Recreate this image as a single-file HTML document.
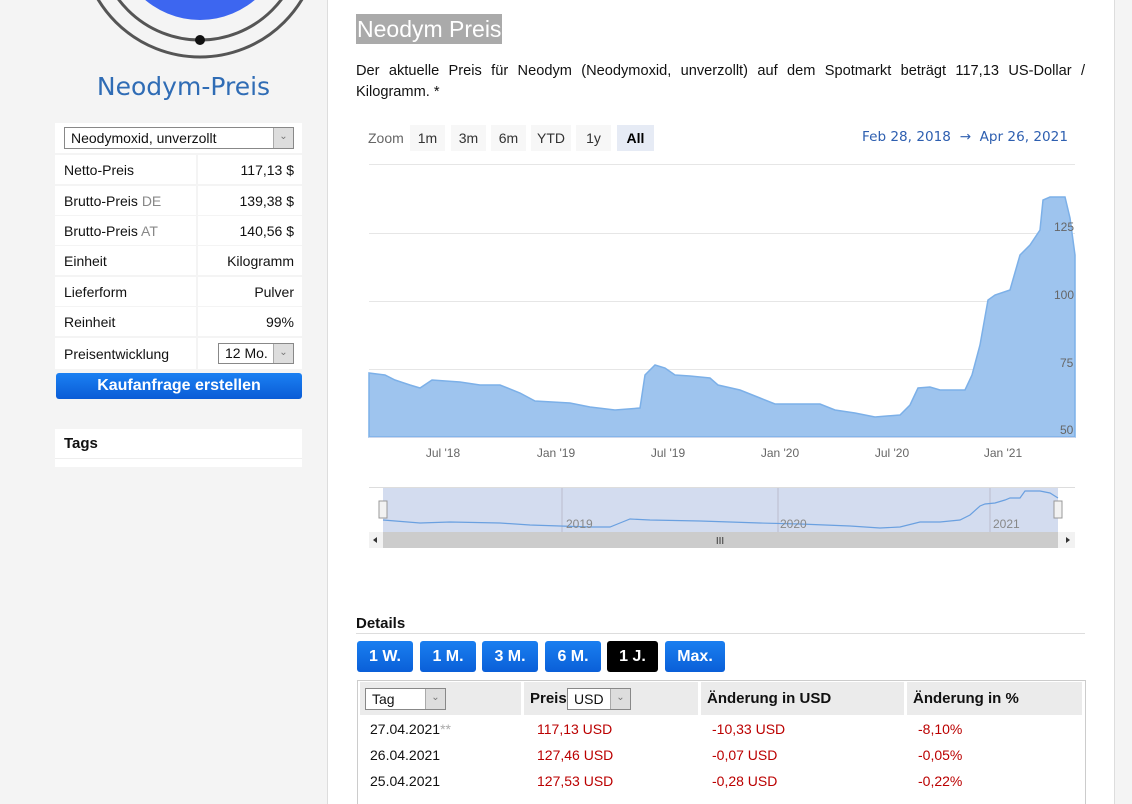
<!DOCTYPE html>
<html><head><meta charset="utf-8"><style>
*{margin:0;padding:0;box-sizing:border-box}
body{width:1132px;height:804px;overflow:hidden;background:#f4f4f4;font-family:"Liberation Sans",sans-serif;font-size:14px;color:#111;position:relative}
.abs{position:absolute}
#main{left:327px;top:0;width:788px;height:804px;background:#fff;border-left:1px solid #ddd;border-right:1px solid #ddd}
.row{position:absolute;left:55px;width:247px;height:29px;background:#fff}
.row .l{position:absolute;left:9px;top:7px}
.row .r{position:absolute;right:8px;top:7px}
.row .sep{position:absolute;left:141px;top:0;width:2px;height:29px;background:#f4f4f4}
.sel{position:absolute;border:1px solid #888;background:#fff;font-size:14px}
.sel .ar{position:absolute;right:0;top:0;bottom:0;width:20px;background:#ddd;border-left:1px solid #aaa;color:#777;font-size:10px;text-align:center;line-height:18px}
.zb{position:absolute;top:125px;height:26px;background:#f7f7f7;font-size:14px;color:#333;text-align:center;line-height:26px}
.bb{position:absolute;top:641px;height:31px;background:linear-gradient(#1a7ff0,#0a5fd8);color:#fff;font-weight:bold;font-size:16px;text-align:center;line-height:31px;border-radius:3px}
.th{position:absolute;top:682px;height:33px;background:#ebebeb;font-weight:bold;font-size:15px;line-height:33px}
.td{position:absolute;font-size:14px}
.red{color:#b00}
</style></head><body>
<svg class="abs" style="left:60px;top:0" width="280" height="70">
<circle cx="140" cy="-65" r="85" fill="#3d66f0"/>
<circle cx="140" cy="-62" r="102" fill="none" stroke="#555" stroke-width="3"/>
<circle cx="140" cy="-62" r="119" fill="none" stroke="#555" stroke-width="3"/>
<circle cx="140" cy="40" r="5" fill="#111"/>
</svg>
<div class="abs" style="left:55px;top:72px;width:257px;text-align:center;font-family:'DejaVu Sans',sans-serif;font-size:25px;color:#2f6cb5">Neodym-Preis</div>
<div class="row" style="top:123px;height:30px"><div class="sel" style="left:9px;top:4px;width:230px;height:22px;padding:2px 6px">Neodymoxid, unverzollt<div class="ar">&#8964;</div></div></div>
<div class="row" style="top:155px"><span class="l">Netto-Preis</span><div class="sep"></div><span class="r">117,13 $</span></div>
<div class="row" style="top:186px"><span class="l">Brutto-Preis <span style="color:#888">DE</span></span><div class="sep"></div><span class="r">139,38 $</span></div>
<div class="row" style="top:216px"><span class="l">Brutto-Preis <span style="color:#888">AT</span></span><div class="sep"></div><span class="r">140,56 $</span></div>
<div class="row" style="top:246px"><span class="l">Einheit</span><div class="sep"></div><span class="r">Kilogramm</span></div>
<div class="row" style="top:277px"><span class="l">Lieferform</span><div class="sep"></div><span class="r">Pulver</span></div>
<div class="row" style="top:307px"><span class="l">Reinheit</span><div class="sep"></div><span class="r">99%</span></div>
<div class="row" style="top:338px;height:31px"><span class="l" style="top:8px">Preisentwicklung</span><div class="sep" style="height:31px"></div><div class="sel" style="left:163px;top:5px;width:76px;height:21px;padding:1px 6px">12 Mo.<div class="ar">&#8964;</div></div></div>
<div class="abs" style="left:56px;top:373px;width:246px;height:26px;background:linear-gradient(#1b80f2,#0a5cd6);border-radius:3px;color:#fff;font-weight:bold;font-size:16px;text-align:center;line-height:26px">Kaufanfrage erstellen</div>
<div class="abs" style="left:55px;top:429px;width:247px;height:38px;background:#fff"><div style="position:absolute;left:9px;top:6px;font-weight:bold;font-size:15px">Tags</div><div style="position:absolute;left:0;right:0;top:29px;border-top:1px solid #eee"></div></div>

<div id="main" class="abs"></div>
<div class="abs" style="left:356px;top:14px;height:30px;background:#aaa;color:#fff;font-family:'Liberation Sans',sans-serif;font-size:23px;line-height:30px;padding:0 1px">Neodym Preis</div>
<div class="abs" style="left:356px;top:61px;width:729px;font-size:14.6px;line-height:21px;text-align:justify;text-align-last:left">Der aktuelle Preis für Neodym (Neodymoxid, unverzollt) auf dem Spotmarkt beträgt 117,13 US-Dollar / Kilogramm. *</div>

<div class="abs" style="left:368px;top:130px;color:#666;font-size:14px">Zoom</div>
<div class="zb" style="left:410px;width:35px">1m</div>
<div class="zb" style="left:451px;width:35px">3m</div>
<div class="zb" style="left:491px;width:35px">6m</div>
<div class="zb" style="left:531px;width:40px">YTD</div>
<div class="zb" style="left:576px;width:35px">1y</div>
<div class="zb" style="left:617px;width:37px;background:#e6ebf5;font-weight:bold;color:#000">All</div>
<div class="abs" style="left:862px;top:129px;color:#2e5fb0;font-family:'DejaVu Sans',sans-serif;font-size:13.6px">Feb 28, 2018 &nbsp;&rarr;&nbsp; Apr 26, 2021</div>

<svg class="abs" style="left:0;top:0" width="1132" height="560">
<g stroke="#e6e6e6" stroke-width="1"><line x1="369" y1="164.5" x2="1075" y2="164.5"/><line x1="369" y1="233.5" x2="1075" y2="233.5"/><line x1="369" y1="301.5" x2="1075" y2="301.5"/><line x1="369" y1="369.5" x2="1075" y2="369.5"/></g>
<path d="M369,437 L369,373 L385,375 L395,380 L410,385 L420,388 L432,380 L460,382 L480,385 L500,385 L520,393 L535,401 L570,403 L590,407 L615,410 L640,408 L645,375 L655,365 L665,368 L675,375 L690,376 L710,378 L718,385 L740,390 L760,398 L775,404 L820,404 L835,410 L855,413 L875,417 L900,415 L910,405 L918,388 L930,387 L940,390 L965,390 L972,375 L980,345 L988,300 L995,295 L1010,290 L1020,255 L1030,245 L1040,230 L1043,200 L1050,197 L1065,197 L1070,218 L1075,255 L1075,437 Z" fill="#9ec4ee" stroke="#7cb0e8" stroke-width="1.5"/>
<line x1="369" y1="437.5" x2="1075" y2="437.5" stroke="#ccd6eb"/>
<g font-family="Liberation Sans" font-size="12" fill="#666"><text x="1054" y="231">125</text><text x="1054" y="299">100</text><text x="1060" y="367">75</text><text x="1060" y="434">50</text>
<g text-anchor="middle"><text x="443" y="457">Jul '18</text><text x="556" y="457">Jan '19</text><text x="668" y="457">Jul '19</text><text x="780" y="457">Jan '20</text><text x="892" y="457">Jul '20</text><text x="1003" y="457">Jan '21</text></g></g>
<line x1="369" y1="487.5" x2="1075" y2="487.5" stroke="#ddd"/>
<rect x="383" y="488" width="675" height="44" fill="#d3dcef"/>
<g stroke="#bbc" stroke-width="1"><line x1="562" y1="488" x2="562" y2="532"/><line x1="778" y1="488" x2="778" y2="532"/><line x1="990" y1="488" x2="990" y2="532"/></g>
<path d="M383,520 L420,523 L450,522 L500,523 L530,525 L560,526 L590,527 L610,527 L620,523 L630,519 L650,520 L700,521 L760,523 L800,524 L850,526 L880,528 L900,527 L920,522 L940,522 L960,520 L970,515 L980,506 L985,504 L995,503 L1005,500 L1010,498 L1020,498 L1025,491 L1040,491 L1050,493 L1058,498" fill="none" stroke="#6aa0e0" stroke-width="1.2"/>
<g font-family="Liberation Sans" font-size="12" fill="#888"><text x="566" y="528">2019</text><text x="780" y="528">2020</text><text x="993" y="528">2021</text></g>
<rect x="379" y="501" width="8" height="17" fill="#f2f2f2" stroke="#999"/><rect x="1054" y="501" width="8" height="17" fill="#f2f2f2" stroke="#999"/>
<rect x="369" y="532" width="706" height="16" fill="#f2f2f2"/><rect x="383" y="532" width="675" height="16" fill="#ccc"/>
<text x="720" y="544" font-size="10" fill="#333" text-anchor="middle" font-family="Liberation Sans">III</text>
<path d="M377,537 L373,540 L377,543Z M1066,537 L1070,540 L1066,543Z" fill="#333"/>
</svg>

<div class="abs" style="left:356px;top:615px;font-weight:bold;font-size:15px">Details</div>
<div class="abs" style="left:356px;top:633px;width:729px;border-top:1px solid #ddd"></div>
<div class="bb" style="left:357px;width:56px">1 W.</div>
<div class="bb" style="left:420px;width:56px">1 M.</div>
<div class="bb" style="left:482px;width:56px">3 M.</div>
<div class="bb" style="left:545px;width:56px">6 M.</div>
<div class="bb" style="left:607px;width:51px;background:#000">1 J.</div>
<div class="bb" style="left:665px;width:60px">Max.</div>

<div class="abs" style="left:357px;top:680px;width:729px;height:124px;border:1px solid #ccc;border-bottom:none"></div>
<div class="th" style="left:360px;width:161px"><div class="sel" style="left:5px;top:6px;width:81px;height:22px;padding:1px 6px;font-weight:normal;line-height:18px">Tag<div class="ar">&#8964;</div></div></div>
<div class="th" style="left:524px;width:174px;padding-left:6px">Preis<div class="sel" style="left:43px;top:6px;width:64px;height:22px;padding:1px 6px;font-weight:normal;line-height:18px">USD<div class="ar">&#8964;</div></div></div>
<div class="th" style="left:701px;width:203px;padding-left:6px">Änderung in USD</div>
<div class="th" style="left:907px;width:175px;padding-left:6px">Änderung in %</div>
<div class="td" style="left:370px;top:721px">27.04.2021<span style="color:#aaa">**</span></div><div class="td red" style="left:537px;top:721px">117,13 USD</div><div class="td red" style="left:712px;top:721px">-10,33 USD</div><div class="td red" style="left:918px;top:721px">-8,10%</div>
<div class="td" style="left:370px;top:747px">26.04.2021</div><div class="td red" style="left:537px;top:747px">127,46 USD</div><div class="td red" style="left:712px;top:747px">-0,07 USD</div><div class="td red" style="left:918px;top:747px">-0,05%</div>
<div class="td" style="left:370px;top:773px">25.04.2021</div><div class="td red" style="left:537px;top:773px">127,53 USD</div><div class="td red" style="left:712px;top:773px">-0,28 USD</div><div class="td red" style="left:918px;top:773px">-0,22%</div>
</body></html>
